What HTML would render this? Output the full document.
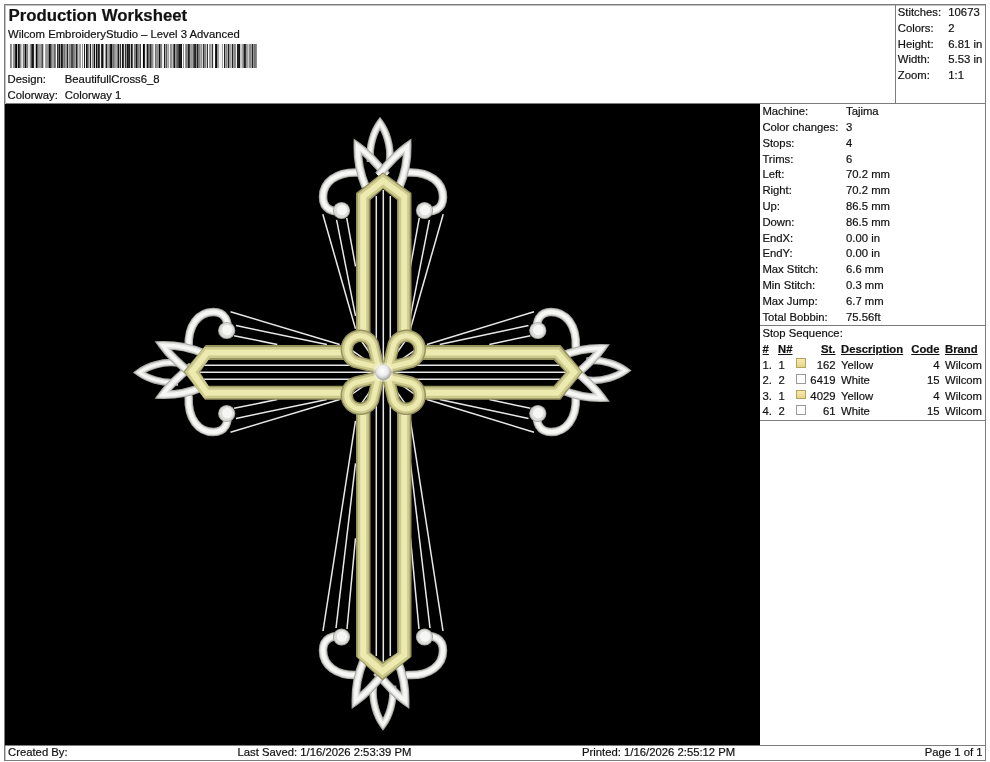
<!DOCTYPE html>
<html><head><meta charset="utf-8"><style>
html,body{margin:0;padding:0;background:#fff;}
body{width:990px;height:762px;position:relative;overflow:hidden;font-family:"Liberation Sans",sans-serif;color:#111;}
.t{position:absolute;line-height:1;white-space:nowrap;}
#txt{position:absolute;left:0;top:0;width:990px;height:762px;will-change:transform;-webkit-text-stroke:0.2px #111;}
.ln{position:absolute;background:#7c7c7c;}
u{text-decoration:underline;text-underline-offset:1px;}
</style></head><body>
<div class="ln" style="left:4px;top:4px;width:982px;height:1px;"></div>
<div class="ln" style="left:4px;top:4px;width:1px;height:757px;"></div>
<div class="ln" style="left:985px;top:4px;width:1px;height:757px;"></div>
<div class="ln" style="left:4px;top:760px;width:982px;height:1px;"></div>
<div class="ln" style="left:4px;top:103px;width:982px;height:1px;"></div>
<div style="position:absolute;left:5px;top:5px;width:980px;height:1px;background:#c4c4c4"></div>
<div style="position:absolute;left:5px;top:5px;width:1px;height:755px;background:#c4c4c4"></div>
<div class="ln" style="left:895px;top:4px;width:1px;height:100px;"></div>
<div class="ln" style="left:760px;top:325px;width:226px;height:1px;"></div>
<div class="ln" style="left:760px;top:420px;width:226px;height:1px;"></div>
<div class="ln" style="left:4px;top:745px;width:982px;height:1px;"></div>
<div id="txt"><div class="t" style="left:8.5px;top:7.71px;font-size:16.8px;font-weight:bold;">Production Worksheet</div>
<div class="t" style="left:8px;top:28.83px;font-size:11.3px;">Wilcom EmbroideryStudio – Level 3 Advanced</div>
<svg style="position:absolute;left:0;top:44px" width="260" height="24" shape-rendering="crispEdges"><rect x="10" y="0" width="1" height="24" fill="rgb(130,130,130)"/><rect x="11" y="0" width="1" height="24" fill="rgb(150,150,150)"/><rect x="12" y="0" width="1" height="24" fill="rgb(240,240,240)"/><rect x="13" y="0" width="1" height="24" fill="rgb(150,150,150)"/><rect x="14" y="0" width="1" height="24" fill="rgb(140,140,140)"/><rect x="15" y="0" width="1" height="24" fill="rgb(40,40,40)"/><rect x="16" y="0" width="1" height="24" fill="rgb(0,0,0)"/><rect x="17" y="0" width="1" height="24" fill="rgb(180,180,180)"/><rect x="18" y="0" width="1" height="24" fill="rgb(20,20,20)"/><rect x="19" y="0" width="1" height="24" fill="rgb(60,60,60)"/><rect x="20" y="0" width="1" height="24" fill="rgb(140,140,140)"/><rect x="21" y="0" width="1" height="24" fill="rgb(200,200,200)"/><rect x="22" y="0" width="1" height="24" fill="rgb(230,230,230)"/><rect x="23" y="0" width="1" height="24" fill="rgb(120,120,120)"/><rect x="24" y="0" width="1" height="24" fill="rgb(140,140,140)"/><rect x="25" y="0" width="1" height="24" fill="rgb(10,10,10)"/><rect x="26" y="0" width="1" height="24" fill="rgb(130,130,130)"/><rect x="27" y="0" width="1" height="24" fill="rgb(120,120,120)"/><rect x="28" y="0" width="1" height="24" fill="rgb(230,230,230)"/><rect x="29" y="0" width="1" height="24" fill="rgb(220,220,220)"/><rect x="30" y="0" width="1" height="24" fill="rgb(150,150,150)"/><rect x="31" y="0" width="1" height="24" fill="rgb(80,80,80)"/><rect x="32" y="0" width="1" height="24" fill="rgb(20,20,20)"/><rect x="33" y="0" width="1" height="24" fill="rgb(40,40,40)"/><rect x="34" y="0" width="1" height="24" fill="rgb(230,230,230)"/><rect x="35" y="0" width="1" height="24" fill="rgb(190,190,190)"/><rect x="36" y="0" width="1" height="24" fill="rgb(10,10,10)"/><rect x="37" y="0" width="1" height="24" fill="rgb(100,100,100)"/><rect x="38" y="0" width="1" height="24" fill="rgb(150,150,150)"/><rect x="39" y="0" width="1" height="24" fill="rgb(160,160,160)"/><rect x="40" y="0" width="1" height="24" fill="rgb(162,162,162)"/><rect x="41" y="0" width="1" height="24" fill="rgb(132,132,132)"/><rect x="42" y="0" width="1" height="24" fill="rgb(72,72,72)"/><rect x="43" y="0" width="1" height="24" fill="rgb(202,202,202)"/><rect x="45" y="0" width="1" height="24" fill="rgb(162,162,162)"/><rect x="46" y="0" width="1" height="24" fill="rgb(152,152,152)"/><rect x="47" y="0" width="1" height="24" fill="rgb(152,152,152)"/><rect x="48" y="0" width="1" height="24" fill="rgb(132,132,132)"/><rect x="49" y="0" width="1" height="24" fill="rgb(12,12,12)"/><rect x="50" y="0" width="1" height="24" fill="rgb(52,52,52)"/><rect x="51" y="0" width="1" height="24" fill="rgb(122,122,122)"/><rect x="52" y="0" width="1" height="24" fill="rgb(162,162,162)"/><rect x="53" y="0" width="1" height="24" fill="rgb(162,162,162)"/><rect x="54" y="0" width="1" height="24" fill="rgb(102,102,102)"/><rect x="55" y="0" width="1" height="24" fill="rgb(132,132,132)"/><rect x="57" y="0" width="1" height="24" fill="rgb(52,52,52)"/><rect x="58" y="0" width="1" height="24" fill="rgb(112,112,112)"/><rect x="59" y="0" width="1" height="24" fill="rgb(22,22,22)"/><rect x="60" y="0" width="1" height="24" fill="rgb(152,152,152)"/><rect x="61" y="0" width="1" height="24" fill="rgb(22,22,22)"/><rect x="62" y="0" width="1" height="24" fill="rgb(52,52,52)"/><rect x="63" y="0" width="1" height="24" fill="rgb(142,142,142)"/><rect x="64" y="0" width="1" height="24" fill="rgb(112,112,112)"/><rect x="65" y="0" width="1" height="24" fill="rgb(162,162,162)"/><rect x="66" y="0" width="1" height="24" fill="rgb(152,152,152)"/><rect x="67" y="0" width="1" height="24" fill="rgb(32,32,32)"/><rect x="68" y="0" width="1" height="24" fill="rgb(192,192,192)"/><rect x="69" y="0" width="1" height="24" fill="rgb(132,132,132)"/><rect x="70" y="0" width="1" height="24" fill="rgb(152,152,152)"/><rect x="71" y="0" width="1" height="24" fill="rgb(72,72,72)"/><rect x="72" y="0" width="1" height="24" fill="rgb(72,72,72)"/><rect x="73" y="0" width="1" height="24" fill="rgb(122,122,122)"/><rect x="74" y="0" width="1" height="24" fill="rgb(132,132,132)"/><rect x="75" y="0" width="1" height="24" fill="rgb(162,162,162)"/><rect x="76" y="0" width="1" height="24" fill="rgb(32,32,32)"/><rect x="77" y="0" width="1" height="24" fill="rgb(122,122,122)"/><rect x="78" y="0" width="1" height="24" fill="rgb(202,202,202)"/><rect x="79" y="0" width="1" height="24" fill="rgb(162,162,162)"/><rect x="80" y="0" width="1" height="24" fill="rgb(152,152,152)"/><rect x="82" y="0" width="1" height="24" fill="rgb(142,142,142)"/><rect x="84" y="0" width="1" height="24" fill="rgb(32,32,32)"/><rect x="85" y="0" width="1" height="24" fill="rgb(242,242,242)"/><rect x="86" y="0" width="1" height="24" fill="rgb(22,22,22)"/><rect x="87" y="0" width="1" height="24" fill="rgb(72,72,72)"/><rect x="88" y="0" width="1" height="24" fill="rgb(132,132,132)"/><rect x="89" y="0" width="1" height="24" fill="rgb(192,192,192)"/><rect x="90" y="0" width="1" height="24" fill="rgb(32,32,32)"/><rect x="91" y="0" width="1" height="24" fill="rgb(232,232,232)"/><rect x="92" y="0" width="1" height="24" fill="rgb(142,142,142)"/><rect x="93" y="0" width="1" height="24" fill="rgb(152,152,152)"/><rect x="94" y="0" width="1" height="24" fill="rgb(12,12,12)"/><rect x="95" y="0" width="1" height="24" fill="rgb(212,212,212)"/><rect x="96" y="0" width="1" height="24" fill="rgb(12,12,12)"/><rect x="97" y="0" width="1" height="24" fill="rgb(122,122,122)"/><rect x="98" y="0" width="1" height="24" fill="rgb(32,32,32)"/><rect x="99" y="0" width="1" height="24" fill="rgb(72,72,72)"/><rect x="100" y="0" width="1" height="24" fill="rgb(242,242,242)"/><rect x="101" y="0" width="1" height="24" fill="rgb(52,52,52)"/><rect x="102" y="0" width="1" height="24" fill="rgb(12,12,12)"/><rect x="103" y="0" width="1" height="24" fill="rgb(142,142,142)"/><rect x="104" y="0" width="1" height="24" fill="rgb(242,242,242)"/><rect x="105" y="0" width="1" height="24" fill="rgb(152,152,152)"/><rect x="106" y="0" width="1" height="24" fill="rgb(32,32,32)"/><rect x="107" y="0" width="1" height="24" fill="rgb(162,162,162)"/><rect x="108" y="0" width="1" height="24" fill="rgb(162,162,162)"/><rect x="109" y="0" width="1" height="24" fill="rgb(132,132,132)"/><rect x="110" y="0" width="1" height="24" fill="rgb(32,32,32)"/><rect x="111" y="0" width="1" height="24" fill="rgb(12,12,12)"/><rect x="112" y="0" width="1" height="24" fill="rgb(132,132,132)"/><rect x="113" y="0" width="1" height="24" fill="rgb(112,112,112)"/><rect x="114" y="0" width="1" height="24" fill="rgb(142,142,142)"/><rect x="115" y="0" width="1" height="24" fill="rgb(162,162,162)"/><rect x="116" y="0" width="1" height="24" fill="rgb(172,172,172)"/><rect x="117" y="0" width="1" height="24" fill="rgb(122,122,122)"/><rect x="118" y="0" width="1" height="24" fill="rgb(22,22,22)"/><rect x="119" y="0" width="1" height="24" fill="rgb(172,172,172)"/><rect x="120" y="0" width="1" height="24" fill="rgb(52,52,52)"/><rect x="121" y="0" width="1" height="24" fill="rgb(232,232,232)"/><rect x="122" y="0" width="1" height="24" fill="rgb(22,22,22)"/><rect x="123" y="0" width="1" height="24" fill="rgb(62,62,62)"/><rect x="124" y="0" width="1" height="24" fill="rgb(212,212,212)"/><rect x="125" y="0" width="1" height="24" fill="rgb(52,52,52)"/><rect x="126" y="0" width="1" height="24" fill="rgb(142,142,142)"/><rect x="127" y="0" width="1" height="24" fill="rgb(22,22,22)"/><rect x="128" y="0" width="1" height="24" fill="rgb(52,52,52)"/><rect x="129" y="0" width="1" height="24" fill="rgb(32,32,32)"/><rect x="130" y="0" width="1" height="24" fill="rgb(190,190,190)"/><rect x="131" y="0" width="1" height="24" fill="rgb(20,20,20)"/><rect x="132" y="0" width="1" height="24" fill="rgb(90,90,90)"/><rect x="133" y="0" width="1" height="24" fill="rgb(230,230,230)"/><rect x="134" y="0" width="1" height="24" fill="rgb(120,120,120)"/><rect x="135" y="0" width="1" height="24" fill="rgb(130,130,130)"/><rect x="136" y="0" width="1" height="24" fill="rgb(20,20,20)"/><rect x="137" y="0" width="1" height="24" fill="rgb(110,110,110)"/><rect x="138" y="0" width="1" height="24" fill="rgb(130,130,130)"/><rect x="139" y="0" width="1" height="24" fill="rgb(150,150,150)"/><rect x="140" y="0" width="1" height="24" fill="rgb(60,60,60)"/><rect x="142" y="0" width="1" height="24" fill="rgb(240,240,240)"/><rect x="143" y="0" width="1" height="24" fill="rgb(0,0,0)"/><rect x="144" y="0" width="1" height="24" fill="rgb(40,40,40)"/><rect x="145" y="0" width="1" height="24" fill="rgb(230,230,230)"/><rect x="146" y="0" width="1" height="24" fill="rgb(170,170,170)"/><rect x="147" y="0" width="1" height="24" fill="rgb(20,20,20)"/><rect x="148" y="0" width="1" height="24" fill="rgb(110,110,110)"/><rect x="149" y="0" width="1" height="24" fill="rgb(130,130,130)"/><rect x="150" y="0" width="1" height="24" fill="rgb(50,50,50)"/><rect x="151" y="0" width="1" height="24" fill="rgb(120,120,120)"/><rect x="152" y="0" width="1" height="24" fill="rgb(140,140,140)"/><rect x="153" y="0" width="1" height="24" fill="rgb(200,200,200)"/><rect x="154" y="0" width="1" height="24" fill="rgb(240,240,240)"/><rect x="155" y="0" width="1" height="24" fill="rgb(110,110,110)"/><rect x="156" y="0" width="1" height="24" fill="rgb(150,150,150)"/><rect x="157" y="0" width="1" height="24" fill="rgb(140,140,140)"/><rect x="158" y="0" width="1" height="24" fill="rgb(150,150,150)"/><rect x="159" y="0" width="1" height="24" fill="rgb(10,10,10)"/><rect x="160" y="0" width="1" height="24" fill="rgb(120,120,120)"/><rect x="161" y="0" width="1" height="24" fill="rgb(130,130,130)"/><rect x="162" y="0" width="1" height="24" fill="rgb(232,232,232)"/><rect x="163" y="0" width="1" height="24" fill="rgb(242,242,242)"/><rect x="164" y="0" width="1" height="24" fill="rgb(32,32,32)"/><rect x="165" y="0" width="1" height="24" fill="rgb(162,162,162)"/><rect x="166" y="0" width="1" height="24" fill="rgb(92,92,92)"/><rect x="167" y="0" width="1" height="24" fill="rgb(182,182,182)"/><rect x="168" y="0" width="1" height="24" fill="rgb(162,162,162)"/><rect x="169" y="0" width="1" height="24" fill="rgb(242,242,242)"/><rect x="170" y="0" width="1" height="24" fill="rgb(142,142,142)"/><rect x="171" y="0" width="1" height="24" fill="rgb(152,152,152)"/><rect x="172" y="0" width="1" height="24" fill="rgb(192,192,192)"/><rect x="173" y="0" width="1" height="24" fill="rgb(102,102,102)"/><rect x="174" y="0" width="1" height="24" fill="rgb(22,22,22)"/><rect x="175" y="0" width="1" height="24" fill="rgb(152,152,152)"/><rect x="176" y="0" width="1" height="24" fill="rgb(122,122,122)"/><rect x="177" y="0" width="1" height="24" fill="rgb(92,92,92)"/><rect x="178" y="0" width="1" height="24" fill="rgb(72,72,72)"/><rect x="179" y="0" width="1" height="24" fill="rgb(22,22,22)"/><rect x="180" y="0" width="1" height="24" fill="rgb(32,32,32)"/><rect x="181" y="0" width="1" height="24" fill="rgb(22,22,22)"/><rect x="183" y="0" width="1" height="24" fill="rgb(142,142,142)"/><rect x="185" y="0" width="1" height="24" fill="rgb(152,152,152)"/><rect x="186" y="0" width="1" height="24" fill="rgb(122,122,122)"/><rect x="187" y="0" width="1" height="24" fill="rgb(142,142,142)"/><rect x="188" y="0" width="1" height="24" fill="rgb(32,32,32)"/><rect x="189" y="0" width="1" height="24" fill="rgb(62,62,62)"/><rect x="190" y="0" width="1" height="24" fill="rgb(162,162,162)"/><rect x="191" y="0" width="1" height="24" fill="rgb(152,152,152)"/><rect x="192" y="0" width="1" height="24" fill="rgb(162,162,162)"/><rect x="193" y="0" width="1" height="24" fill="rgb(92,92,92)"/><rect x="194" y="0" width="1" height="24" fill="rgb(52,52,52)"/><rect x="195" y="0" width="1" height="24" fill="rgb(32,32,32)"/><rect x="196" y="0" width="1" height="24" fill="rgb(142,142,142)"/><rect x="197" y="0" width="1" height="24" fill="rgb(32,32,32)"/><rect x="198" y="0" width="1" height="24" fill="rgb(122,122,122)"/><rect x="199" y="0" width="1" height="24" fill="rgb(132,132,132)"/><rect x="200" y="0" width="1" height="24" fill="rgb(172,172,172)"/><rect x="201" y="0" width="1" height="24" fill="rgb(152,152,152)"/><rect x="202" y="0" width="1" height="24" fill="rgb(212,212,212)"/><rect x="203" y="0" width="1" height="24" fill="rgb(52,52,52)"/><rect x="204" y="0" width="1" height="24" fill="rgb(132,132,132)"/><rect x="205" y="0" width="1" height="24" fill="rgb(132,132,132)"/><rect x="206" y="0" width="1" height="24" fill="rgb(202,202,202)"/><rect x="207" y="0" width="1" height="24" fill="rgb(52,52,52)"/><rect x="209" y="0" width="1" height="24" fill="rgb(152,152,152)"/><rect x="210" y="0" width="1" height="24" fill="rgb(162,162,162)"/><rect x="211" y="0" width="1" height="24" fill="rgb(182,182,182)"/><rect x="212" y="0" width="1" height="24" fill="rgb(52,52,52)"/><rect x="213" y="0" width="1" height="24" fill="rgb(232,232,232)"/><rect x="215" y="0" width="1" height="24" fill="rgb(32,32,32)"/><rect x="216" y="0" width="1" height="24" fill="rgb(12,12,12)"/><rect x="217" y="0" width="1" height="24" fill="rgb(152,152,152)"/><rect x="218" y="0" width="1" height="24" fill="rgb(162,162,162)"/><rect x="219" y="0" width="1" height="24" fill="rgb(242,242,242)"/><rect x="220" y="0" width="1" height="24" fill="rgb(242,242,242)"/><rect x="221" y="0" width="1" height="24" fill="rgb(242,242,242)"/><rect x="222" y="0" width="1" height="24" fill="rgb(162,162,162)"/><rect x="224" y="0" width="1" height="24" fill="rgb(32,32,32)"/><rect x="225" y="0" width="1" height="24" fill="rgb(162,162,162)"/><rect x="226" y="0" width="1" height="24" fill="rgb(132,132,132)"/><rect x="227" y="0" width="1" height="24" fill="rgb(172,172,172)"/><rect x="228" y="0" width="1" height="24" fill="rgb(32,32,32)"/><rect x="229" y="0" width="1" height="24" fill="rgb(152,152,152)"/><rect x="230" y="0" width="1" height="24" fill="rgb(162,162,162)"/><rect x="231" y="0" width="1" height="24" fill="rgb(192,192,192)"/><rect x="232" y="0" width="1" height="24" fill="rgb(32,32,32)"/><rect x="233" y="0" width="1" height="24" fill="rgb(162,162,162)"/><rect x="234" y="0" width="1" height="24" fill="rgb(132,132,132)"/><rect x="235" y="0" width="1" height="24" fill="rgb(142,142,142)"/><rect x="236" y="0" width="1" height="24" fill="rgb(242,242,242)"/><rect x="237" y="0" width="1" height="24" fill="rgb(32,32,32)"/><rect x="238" y="0" width="1" height="24" fill="rgb(32,32,32)"/><rect x="239" y="0" width="1" height="24" fill="rgb(22,22,22)"/><rect x="240" y="0" width="1" height="24" fill="rgb(202,202,202)"/><rect x="241" y="0" width="1" height="24" fill="rgb(202,202,202)"/><rect x="242" y="0" width="1" height="24" fill="rgb(162,162,162)"/><rect x="243" y="0" width="1" height="24" fill="rgb(122,122,122)"/><rect x="244" y="0" width="1" height="24" fill="rgb(32,32,32)"/><rect x="245" y="0" width="1" height="24" fill="rgb(52,52,52)"/><rect x="246" y="0" width="1" height="24" fill="rgb(152,152,152)"/><rect x="247" y="0" width="1" height="24" fill="rgb(162,162,162)"/><rect x="248" y="0" width="1" height="24" fill="rgb(202,202,202)"/><rect x="249" y="0" width="1" height="24" fill="rgb(142,142,142)"/><rect x="250" y="0" width="1" height="24" fill="rgb(132,132,132)"/><rect x="251" y="0" width="1" height="24" fill="rgb(162,162,162)"/><rect x="252" y="0" width="1" height="24" fill="rgb(32,32,32)"/><rect x="253" y="0" width="1" height="24" fill="rgb(152,152,152)"/><rect x="254" y="0" width="1" height="24" fill="rgb(112,112,112)"/><rect x="255" y="0" width="1" height="24" fill="rgb(122,122,122)"/><rect x="256" y="0" width="1" height="24" fill="rgb(142,142,142)"/></svg>
<div class="t" style="left:7.6px;top:74.43px;font-size:11.3px;">Design:</div>
<div class="t" style="left:64.8px;top:74.43px;font-size:11.3px;">BeautifullCross6_8</div>
<div class="t" style="left:7.6px;top:90.23px;font-size:11.3px;">Colorway:</div>
<div class="t" style="left:64.8px;top:90.23px;font-size:11.3px;">Colorway 1</div>
<div class="t" style="left:897.8px;top:7.03px;font-size:11.3px;">Stitches:</div>
<div class="t" style="left:948.3px;top:7.03px;font-size:11.3px;">10673</div>
<div class="t" style="left:897.8px;top:22.78px;font-size:11.3px;">Colors:</div>
<div class="t" style="left:948.3px;top:22.78px;font-size:11.3px;">2</div>
<div class="t" style="left:897.8px;top:38.53px;font-size:11.3px;">Height:</div>
<div class="t" style="left:948.3px;top:38.53px;font-size:11.3px;">6.81 in</div>
<div class="t" style="left:897.8px;top:54.28px;font-size:11.3px;">Width:</div>
<div class="t" style="left:948.3px;top:54.28px;font-size:11.3px;">5.53 in</div>
<div class="t" style="left:897.8px;top:70.03px;font-size:11.3px;">Zoom:</div>
<div class="t" style="left:948.3px;top:70.03px;font-size:11.3px;">1:1</div>
<div class="t" style="left:762.4px;top:106.13px;font-size:11.3px;">Machine:</div>
<div class="t" style="left:846px;top:106.13px;font-size:11.3px;">Tajima</div>
<div class="t" style="left:762.4px;top:121.93px;font-size:11.3px;">Color changes:</div>
<div class="t" style="left:846px;top:121.93px;font-size:11.3px;">3</div>
<div class="t" style="left:762.4px;top:137.73px;font-size:11.3px;">Stops:</div>
<div class="t" style="left:846px;top:137.73px;font-size:11.3px;">4</div>
<div class="t" style="left:762.4px;top:153.53px;font-size:11.3px;">Trims:</div>
<div class="t" style="left:846px;top:153.53px;font-size:11.3px;">6</div>
<div class="t" style="left:762.4px;top:169.33px;font-size:11.3px;">Left:</div>
<div class="t" style="left:846px;top:169.33px;font-size:11.3px;">70.2 mm</div>
<div class="t" style="left:762.4px;top:185.13px;font-size:11.3px;">Right:</div>
<div class="t" style="left:846px;top:185.13px;font-size:11.3px;">70.2 mm</div>
<div class="t" style="left:762.4px;top:200.93px;font-size:11.3px;">Up:</div>
<div class="t" style="left:846px;top:200.93px;font-size:11.3px;">86.5 mm</div>
<div class="t" style="left:762.4px;top:216.73px;font-size:11.3px;">Down:</div>
<div class="t" style="left:846px;top:216.73px;font-size:11.3px;">86.5 mm</div>
<div class="t" style="left:762.4px;top:232.53px;font-size:11.3px;">EndX:</div>
<div class="t" style="left:846px;top:232.53px;font-size:11.3px;">0.00 in</div>
<div class="t" style="left:762.4px;top:248.33px;font-size:11.3px;">EndY:</div>
<div class="t" style="left:846px;top:248.33px;font-size:11.3px;">0.00 in</div>
<div class="t" style="left:762.4px;top:264.13px;font-size:11.3px;">Max Stitch:</div>
<div class="t" style="left:846px;top:264.13px;font-size:11.3px;">6.6 mm</div>
<div class="t" style="left:762.4px;top:279.93px;font-size:11.3px;">Min Stitch:</div>
<div class="t" style="left:846px;top:279.93px;font-size:11.3px;">0.3 mm</div>
<div class="t" style="left:762.4px;top:295.73px;font-size:11.3px;">Max Jump:</div>
<div class="t" style="left:846px;top:295.73px;font-size:11.3px;">6.7 mm</div>
<div class="t" style="left:762.4px;top:311.53px;font-size:11.3px;">Total Bobbin:</div>
<div class="t" style="left:846px;top:311.53px;font-size:11.3px;">75.56ft</div>
<div class="t" style="left:762.4px;top:327.53px;font-size:11.3px;">Stop Sequence:</div>
<div class="t" style="left:762.6px;top:343.53px;font-size:11.3px;font-weight:bold;"><u>#</u></div>
<div class="t" style="left:778px;top:343.53px;font-size:11.3px;font-weight:bold;"><u>N#</u></div>
<div class="t" style="right:154.5px;top:343.53px;font-size:11.3px;text-align:right;font-weight:bold;"><u>St.</u></div>
<div class="t" style="left:841px;top:343.53px;font-size:11.3px;font-weight:bold;"><u>Description</u></div>
<div class="t" style="right:50.5px;top:343.53px;font-size:11.3px;text-align:right;font-weight:bold;"><u>Code</u></div>
<div class="t" style="left:945px;top:343.53px;font-size:11.3px;font-weight:bold;"><u>Brand</u></div>
<div class="t" style="left:762.4px;top:359.53px;font-size:11.3px;">1.</div>
<div class="t" style="left:778.5px;top:359.53px;font-size:11.3px;">1</div>
<div style="position:absolute;left:796px;top:358.4px;width:8px;height:7.6px;border:1px solid #b4a45c;background:linear-gradient(#f6eab0,#e6d488);"></div>
<div class="t" style="right:154.5px;top:359.53px;font-size:11.3px;text-align:right;">162</div>
<div class="t" style="left:841px;top:359.53px;font-size:11.3px;">Yellow</div>
<div class="t" style="right:50.5px;top:359.53px;font-size:11.3px;text-align:right;">4</div>
<div class="t" style="left:945px;top:359.53px;font-size:11.3px;">Wilcom</div>
<div class="t" style="left:762.4px;top:375.18px;font-size:11.3px;">2.</div>
<div class="t" style="left:778.5px;top:375.18px;font-size:11.3px;">2</div>
<div style="position:absolute;left:796px;top:374.0px;width:8px;height:7.6px;border:1px solid #9a9a9a;background:#fff;"></div>
<div class="t" style="right:154.5px;top:375.18px;font-size:11.3px;text-align:right;">6419</div>
<div class="t" style="left:841px;top:375.18px;font-size:11.3px;">White</div>
<div class="t" style="right:50.5px;top:375.18px;font-size:11.3px;text-align:right;">15</div>
<div class="t" style="left:945px;top:375.18px;font-size:11.3px;">Wilcom</div>
<div class="t" style="left:762.4px;top:390.83px;font-size:11.3px;">3.</div>
<div class="t" style="left:778.5px;top:390.83px;font-size:11.3px;">1</div>
<div style="position:absolute;left:796px;top:389.7px;width:8px;height:7.6px;border:1px solid #b4a45c;background:linear-gradient(#f6eab0,#e6d488);"></div>
<div class="t" style="right:154.5px;top:390.83px;font-size:11.3px;text-align:right;">4029</div>
<div class="t" style="left:841px;top:390.83px;font-size:11.3px;">Yellow</div>
<div class="t" style="right:50.5px;top:390.83px;font-size:11.3px;text-align:right;">4</div>
<div class="t" style="left:945px;top:390.83px;font-size:11.3px;">Wilcom</div>
<div class="t" style="left:762.4px;top:406.48px;font-size:11.3px;">4.</div>
<div class="t" style="left:778.5px;top:406.48px;font-size:11.3px;">2</div>
<div style="position:absolute;left:796px;top:405.3px;width:8px;height:7.6px;border:1px solid #9a9a9a;background:#fff;"></div>
<div class="t" style="right:154.5px;top:406.48px;font-size:11.3px;text-align:right;">61</div>
<div class="t" style="left:841px;top:406.48px;font-size:11.3px;">White</div>
<div class="t" style="right:50.5px;top:406.48px;font-size:11.3px;text-align:right;">15</div>
<div class="t" style="left:945px;top:406.48px;font-size:11.3px;">Wilcom</div>
<div class="t" style="left:8px;top:746.83px;font-size:11.3px;">Created By:</div>
<div class="t" style="left:237.5px;top:746.83px;font-size:11.3px;">Last Saved: 1/16/2026 2:53:39 PM</div>
<div class="t" style="left:582px;top:746.83px;font-size:11.3px;">Printed: 1/16/2026 2:55:12 PM</div>
<div class="t" style="right:7.5px;top:746.83px;font-size:11.3px;text-align:right;">Page 1 of 1</div>
</div><div style="position:absolute;left:5px;top:104px;width:755px;height:641px;background:#000;overflow:hidden"><svg width="755" height="641" viewBox="5 104 755 641" style="display:block">
<defs>
<filter id="soft" x="-5%" y="-5%" width="110%" height="110%"><feGaussianBlur stdDeviation="0.6"/></filter>
<radialGradient id="dot" cx="45%" cy="40%" r="60%"><stop offset="0" stop-color="#ffffff"/><stop offset="0.55" stop-color="#ececec"/><stop offset="1" stop-color="#a0a0a0"/></radialGradient>
</defs>
<g filter="url(#soft)">
<line x1="376.30" y1="196.00" x2="376.30" y2="656.00" stroke="#e6e6e6" stroke-width="1.5"/>
<line x1="383.30" y1="190.00" x2="383.30" y2="662.00" stroke="#e6e6e6" stroke-width="1.5"/>
<line x1="390.30" y1="196.00" x2="390.30" y2="656.00" stroke="#e6e6e6" stroke-width="1.5"/>
<line x1="204.00" y1="365.30" x2="560.00" y2="365.30" stroke="#e6e6e6" stroke-width="1.5"/>
<line x1="199.00" y1="372.30" x2="566.00" y2="372.30" stroke="#e6e6e6" stroke-width="1.5"/>
<line x1="204.00" y1="379.30" x2="560.00" y2="379.30" stroke="#e6e6e6" stroke-width="1.5"/>
<line x1="443.20" y1="214.30" x2="410.50" y2="328.70" stroke="#e8e8e8" stroke-width="1.5"/>
<line x1="429.40" y1="219.80" x2="410.50" y2="315.90" stroke="#e8e8e8" stroke-width="1.5"/>
<line x1="419.30" y1="217.90" x2="410.50" y2="266.30" stroke="#e8e8e8" stroke-width="1.5"/>
<line x1="322.80" y1="214.30" x2="355.50" y2="328.70" stroke="#e8e8e8" stroke-width="1.5"/>
<line x1="336.60" y1="219.80" x2="355.50" y2="315.90" stroke="#e8e8e8" stroke-width="1.5"/>
<line x1="346.70" y1="217.90" x2="355.50" y2="266.30" stroke="#e8e8e8" stroke-width="1.5"/>
<line x1="323.00" y1="631.00" x2="355.50" y2="420.80" stroke="#e8e8e8" stroke-width="1.5"/>
<line x1="336.00" y1="628.00" x2="355.50" y2="463.30" stroke="#e8e8e8" stroke-width="1.5"/>
<line x1="347.00" y1="629.00" x2="355.50" y2="538.30" stroke="#e8e8e8" stroke-width="1.5"/>
<line x1="443.00" y1="631.00" x2="410.50" y2="420.80" stroke="#e8e8e8" stroke-width="1.5"/>
<line x1="430.00" y1="628.00" x2="410.50" y2="463.30" stroke="#e8e8e8" stroke-width="1.5"/>
<line x1="419.00" y1="629.00" x2="410.50" y2="538.30" stroke="#e8e8e8" stroke-width="1.5"/>
<line x1="230.50" y1="311.80" x2="339.70" y2="344.50" stroke="#e8e8e8" stroke-width="1.5"/>
<line x1="236.00" y1="325.60" x2="326.90" y2="344.50" stroke="#e8e8e8" stroke-width="1.5"/>
<line x1="234.10" y1="335.70" x2="277.30" y2="344.50" stroke="#e8e8e8" stroke-width="1.5"/>
<line x1="230.50" y1="432.20" x2="339.70" y2="399.50" stroke="#e8e8e8" stroke-width="1.5"/>
<line x1="236.00" y1="418.40" x2="326.90" y2="399.50" stroke="#e8e8e8" stroke-width="1.5"/>
<line x1="234.10" y1="408.30" x2="277.30" y2="399.50" stroke="#e8e8e8" stroke-width="1.5"/>
<line x1="534.00" y1="432.20" x2="426.90" y2="399.50" stroke="#e8e8e8" stroke-width="1.5"/>
<line x1="528.50" y1="418.40" x2="439.70" y2="399.50" stroke="#e8e8e8" stroke-width="1.5"/>
<line x1="530.40" y1="408.30" x2="489.30" y2="399.50" stroke="#e8e8e8" stroke-width="1.5"/>
<line x1="534.00" y1="311.80" x2="426.90" y2="344.50" stroke="#e8e8e8" stroke-width="1.5"/>
<line x1="528.50" y1="325.60" x2="439.70" y2="344.50" stroke="#e8e8e8" stroke-width="1.5"/>
<line x1="530.40" y1="335.70" x2="489.30" y2="344.50" stroke="#e8e8e8" stroke-width="1.5"/>
<path d="M 358.00,172.50 C 336.00,171.50 323.00,182.50 323.00,197.00 C 323.00,209.50 333.00,212.50 342.00,211.00" fill="none" stroke="#a8a8a4" stroke-width="8.5" stroke-linecap="round" stroke-linejoin="round"/><path d="M 358.00,172.50 C 336.00,171.50 323.00,182.50 323.00,197.00 C 323.00,209.50 333.00,212.50 342.00,211.00" fill="none" stroke="#dcdcd9" stroke-width="6.5" stroke-linecap="round" stroke-linejoin="round"/><path d="M 358.00,172.50 C 336.00,171.50 323.00,182.50 323.00,197.00 C 323.00,209.50 333.00,212.50 342.00,211.00" fill="none" stroke="#f6f6f4" stroke-width="4.0" stroke-linecap="round" stroke-linejoin="round"/>
<circle cx="341.50" cy="210.50" r="8.6" fill="#a8a8a4"/><circle cx="341.50" cy="210.50" r="7.6" fill="#dcdcd9"/><circle cx="342.00" cy="210.00" r="5.2" fill="#f6f6f4"/>
<path d="M 408.00,172.50 C 430.00,171.50 443.00,182.50 443.00,197.00 C 443.00,209.50 433.00,212.50 424.00,211.00" fill="none" stroke="#a8a8a4" stroke-width="8.5" stroke-linecap="round" stroke-linejoin="round"/><path d="M 408.00,172.50 C 430.00,171.50 443.00,182.50 443.00,197.00 C 443.00,209.50 433.00,212.50 424.00,211.00" fill="none" stroke="#dcdcd9" stroke-width="6.5" stroke-linecap="round" stroke-linejoin="round"/><path d="M 408.00,172.50 C 430.00,171.50 443.00,182.50 443.00,197.00 C 443.00,209.50 433.00,212.50 424.00,211.00" fill="none" stroke="#f6f6f4" stroke-width="4.0" stroke-linecap="round" stroke-linejoin="round"/>
<circle cx="424.50" cy="210.50" r="8.6" fill="#a8a8a4"/><circle cx="424.50" cy="210.50" r="7.6" fill="#dcdcd9"/><circle cx="425.00" cy="210.00" r="5.2" fill="#f6f6f4"/>
<path d="M 370.50,161.50 C 368.50,145.50 374.50,130.50 380.00,123.00 C 385.50,130.50 391.50,145.50 389.50,161.50" fill="none" stroke="#a8a8a4" stroke-width="7.5" stroke-linecap="butt" stroke-linejoin="miter" stroke-miterlimit="6"/><path d="M 370.50,161.50 C 368.50,145.50 374.50,130.50 380.00,123.00 C 385.50,130.50 391.50,145.50 389.50,161.50" fill="none" stroke="#dcdcd9" stroke-width="5.3" stroke-linecap="butt" stroke-linejoin="miter" stroke-miterlimit="6"/><path d="M 370.50,161.50 C 368.50,145.50 374.50,130.50 380.00,123.00 C 385.50,130.50 391.50,145.50 389.50,161.50" fill="none" stroke="#f6f6f4" stroke-width="2.7" stroke-linecap="butt" stroke-linejoin="miter" stroke-miterlimit="6"/>
<path d="M 365.50,186.50 C 360.00,173.50 357.50,160.50 357.75,146.50 Q 370.50,155.50 386.50,175.50" fill="none" stroke="#a8a8a4" stroke-width="8.5" stroke-linecap="butt" stroke-linejoin="miter" stroke-miterlimit="6"/><path d="M 365.50,186.50 C 360.00,173.50 357.50,160.50 357.75,146.50 Q 370.50,155.50 386.50,175.50" fill="none" stroke="#dcdcd9" stroke-width="6.3" stroke-linecap="butt" stroke-linejoin="miter" stroke-miterlimit="6"/><path d="M 365.50,186.50 C 360.00,173.50 357.50,160.50 357.75,146.50 Q 370.50,155.50 386.50,175.50" fill="none" stroke="#f6f6f4" stroke-width="3.7" stroke-linecap="butt" stroke-linejoin="miter" stroke-miterlimit="6"/>
<path d="M 399.50,186.50 C 405.00,173.50 407.50,160.50 407.25,146.50 Q 394.50,155.50 378.50,175.50" fill="none" stroke="#a8a8a4" stroke-width="8.5" stroke-linecap="butt" stroke-linejoin="miter" stroke-miterlimit="6"/><path d="M 399.50,186.50 C 405.00,173.50 407.50,160.50 407.25,146.50 Q 394.50,155.50 378.50,175.50" fill="none" stroke="#dcdcd9" stroke-width="6.3" stroke-linecap="butt" stroke-linejoin="miter" stroke-miterlimit="6"/><path d="M 399.50,186.50 C 405.00,173.50 407.50,160.50 407.25,146.50 Q 394.50,155.50 378.50,175.50" fill="none" stroke="#f6f6f4" stroke-width="3.7" stroke-linecap="butt" stroke-linejoin="miter" stroke-miterlimit="6"/>
<path d="M 408.00,675.00 C 430.00,676.00 443.00,665.00 443.00,650.50 C 443.00,638.00 433.00,635.00 424.00,636.50" fill="none" stroke="#a8a8a4" stroke-width="8.5" stroke-linecap="round" stroke-linejoin="round"/><path d="M 408.00,675.00 C 430.00,676.00 443.00,665.00 443.00,650.50 C 443.00,638.00 433.00,635.00 424.00,636.50" fill="none" stroke="#dcdcd9" stroke-width="6.5" stroke-linecap="round" stroke-linejoin="round"/><path d="M 408.00,675.00 C 430.00,676.00 443.00,665.00 443.00,650.50 C 443.00,638.00 433.00,635.00 424.00,636.50" fill="none" stroke="#f6f6f4" stroke-width="4.0" stroke-linecap="round" stroke-linejoin="round"/>
<circle cx="424.50" cy="637.00" r="8.6" fill="#a8a8a4"/><circle cx="424.50" cy="637.00" r="7.6" fill="#dcdcd9"/><circle cx="425.00" cy="636.50" r="5.2" fill="#f6f6f4"/>
<path d="M 358.00,675.00 C 336.00,676.00 323.00,665.00 323.00,650.50 C 323.00,638.00 333.00,635.00 342.00,636.50" fill="none" stroke="#a8a8a4" stroke-width="8.5" stroke-linecap="round" stroke-linejoin="round"/><path d="M 358.00,675.00 C 336.00,676.00 323.00,665.00 323.00,650.50 C 323.00,638.00 333.00,635.00 342.00,636.50" fill="none" stroke="#dcdcd9" stroke-width="6.5" stroke-linecap="round" stroke-linejoin="round"/><path d="M 358.00,675.00 C 336.00,676.00 323.00,665.00 323.00,650.50 C 323.00,638.00 333.00,635.00 342.00,636.50" fill="none" stroke="#f6f6f4" stroke-width="4.0" stroke-linecap="round" stroke-linejoin="round"/>
<circle cx="341.50" cy="637.00" r="8.6" fill="#a8a8a4"/><circle cx="341.50" cy="637.00" r="7.6" fill="#dcdcd9"/><circle cx="342.00" cy="636.50" r="5.2" fill="#f6f6f4"/>
<path d="M 392.50,686.00 C 394.50,702.00 388.50,717.00 383.00,724.50 C 377.50,717.00 371.50,702.00 373.50,686.00" fill="none" stroke="#a8a8a4" stroke-width="7.5" stroke-linecap="butt" stroke-linejoin="miter" stroke-miterlimit="6"/><path d="M 392.50,686.00 C 394.50,702.00 388.50,717.00 383.00,724.50 C 377.50,717.00 371.50,702.00 373.50,686.00" fill="none" stroke="#dcdcd9" stroke-width="5.3" stroke-linecap="butt" stroke-linejoin="miter" stroke-miterlimit="6"/><path d="M 392.50,686.00 C 394.50,702.00 388.50,717.00 383.00,724.50 C 377.50,717.00 371.50,702.00 373.50,686.00" fill="none" stroke="#f6f6f4" stroke-width="2.7" stroke-linecap="butt" stroke-linejoin="miter" stroke-miterlimit="6"/>
<path d="M 397.50,661.00 C 403.00,674.00 405.50,687.00 405.25,701.00 Q 392.50,692.00 376.50,672.00" fill="none" stroke="#a8a8a4" stroke-width="8.5" stroke-linecap="butt" stroke-linejoin="miter" stroke-miterlimit="6"/><path d="M 397.50,661.00 C 403.00,674.00 405.50,687.00 405.25,701.00 Q 392.50,692.00 376.50,672.00" fill="none" stroke="#dcdcd9" stroke-width="6.3" stroke-linecap="butt" stroke-linejoin="miter" stroke-miterlimit="6"/><path d="M 397.50,661.00 C 403.00,674.00 405.50,687.00 405.25,701.00 Q 392.50,692.00 376.50,672.00" fill="none" stroke="#f6f6f4" stroke-width="3.7" stroke-linecap="butt" stroke-linejoin="miter" stroke-miterlimit="6"/>
<path d="M 363.50,661.00 C 358.00,674.00 355.50,687.00 355.75,701.00 Q 368.50,692.00 384.50,672.00" fill="none" stroke="#a8a8a4" stroke-width="8.5" stroke-linecap="butt" stroke-linejoin="miter" stroke-miterlimit="6"/><path d="M 363.50,661.00 C 358.00,674.00 355.50,687.00 355.75,701.00 Q 368.50,692.00 384.50,672.00" fill="none" stroke="#dcdcd9" stroke-width="6.3" stroke-linecap="butt" stroke-linejoin="miter" stroke-miterlimit="6"/><path d="M 363.50,661.00 C 358.00,674.00 355.50,687.00 355.75,701.00 Q 368.50,692.00 384.50,672.00" fill="none" stroke="#f6f6f4" stroke-width="3.7" stroke-linecap="butt" stroke-linejoin="miter" stroke-miterlimit="6"/>
<path d="M 188.70,397.00 C 187.70,419.00 198.70,432.00 213.20,432.00 C 225.70,432.00 228.70,422.00 227.20,413.00" fill="none" stroke="#a8a8a4" stroke-width="8.5" stroke-linecap="round" stroke-linejoin="round"/><path d="M 188.70,397.00 C 187.70,419.00 198.70,432.00 213.20,432.00 C 225.70,432.00 228.70,422.00 227.20,413.00" fill="none" stroke="#dcdcd9" stroke-width="6.5" stroke-linecap="round" stroke-linejoin="round"/><path d="M 188.70,397.00 C 187.70,419.00 198.70,432.00 213.20,432.00 C 225.70,432.00 228.70,422.00 227.20,413.00" fill="none" stroke="#f6f6f4" stroke-width="4.0" stroke-linecap="round" stroke-linejoin="round"/>
<circle cx="226.70" cy="413.50" r="8.6" fill="#a8a8a4"/><circle cx="226.70" cy="413.50" r="7.6" fill="#dcdcd9"/><circle cx="227.20" cy="413.00" r="5.2" fill="#f6f6f4"/>
<path d="M 188.70,347.00 C 187.70,325.00 198.70,312.00 213.20,312.00 C 225.70,312.00 228.70,322.00 227.20,331.00" fill="none" stroke="#a8a8a4" stroke-width="8.5" stroke-linecap="round" stroke-linejoin="round"/><path d="M 188.70,347.00 C 187.70,325.00 198.70,312.00 213.20,312.00 C 225.70,312.00 228.70,322.00 227.20,331.00" fill="none" stroke="#dcdcd9" stroke-width="6.5" stroke-linecap="round" stroke-linejoin="round"/><path d="M 188.70,347.00 C 187.70,325.00 198.70,312.00 213.20,312.00 C 225.70,312.00 228.70,322.00 227.20,331.00" fill="none" stroke="#f6f6f4" stroke-width="4.0" stroke-linecap="round" stroke-linejoin="round"/>
<circle cx="226.70" cy="330.50" r="8.6" fill="#a8a8a4"/><circle cx="226.70" cy="330.50" r="7.6" fill="#dcdcd9"/><circle cx="227.20" cy="330.00" r="5.2" fill="#f6f6f4"/>
<path d="M 177.70,382.00 C 161.70,384.00 146.70,378.00 139.20,372.50 C 146.70,367.00 161.70,361.00 177.70,363.00" fill="none" stroke="#a8a8a4" stroke-width="7.5" stroke-linecap="butt" stroke-linejoin="miter" stroke-miterlimit="6"/><path d="M 177.70,382.00 C 161.70,384.00 146.70,378.00 139.20,372.50 C 146.70,367.00 161.70,361.00 177.70,363.00" fill="none" stroke="#dcdcd9" stroke-width="5.3" stroke-linecap="butt" stroke-linejoin="miter" stroke-miterlimit="6"/><path d="M 177.70,382.00 C 161.70,384.00 146.70,378.00 139.20,372.50 C 146.70,367.00 161.70,361.00 177.70,363.00" fill="none" stroke="#f6f6f4" stroke-width="2.7" stroke-linecap="butt" stroke-linejoin="miter" stroke-miterlimit="6"/>
<path d="M 202.70,387.00 C 189.70,392.50 176.70,395.00 162.70,394.75 Q 171.70,382.00 191.70,366.00" fill="none" stroke="#a8a8a4" stroke-width="8.5" stroke-linecap="butt" stroke-linejoin="miter" stroke-miterlimit="6"/><path d="M 202.70,387.00 C 189.70,392.50 176.70,395.00 162.70,394.75 Q 171.70,382.00 191.70,366.00" fill="none" stroke="#dcdcd9" stroke-width="6.3" stroke-linecap="butt" stroke-linejoin="miter" stroke-miterlimit="6"/><path d="M 202.70,387.00 C 189.70,392.50 176.70,395.00 162.70,394.75 Q 171.70,382.00 191.70,366.00" fill="none" stroke="#f6f6f4" stroke-width="3.7" stroke-linecap="butt" stroke-linejoin="miter" stroke-miterlimit="6"/>
<path d="M 202.70,353.00 C 189.70,347.50 176.70,345.00 162.70,345.25 Q 171.70,358.00 191.70,374.00" fill="none" stroke="#a8a8a4" stroke-width="8.5" stroke-linecap="butt" stroke-linejoin="miter" stroke-miterlimit="6"/><path d="M 202.70,353.00 C 189.70,347.50 176.70,345.00 162.70,345.25 Q 171.70,358.00 191.70,374.00" fill="none" stroke="#dcdcd9" stroke-width="6.3" stroke-linecap="butt" stroke-linejoin="miter" stroke-miterlimit="6"/><path d="M 202.70,353.00 C 189.70,347.50 176.70,345.00 162.70,345.25 Q 171.70,358.00 191.70,374.00" fill="none" stroke="#f6f6f4" stroke-width="3.7" stroke-linecap="butt" stroke-linejoin="miter" stroke-miterlimit="6"/>
<path d="M 575.80,347.00 C 576.80,325.00 565.80,312.00 551.30,312.00 C 538.80,312.00 535.80,322.00 537.30,331.00" fill="none" stroke="#a8a8a4" stroke-width="8.5" stroke-linecap="round" stroke-linejoin="round"/><path d="M 575.80,347.00 C 576.80,325.00 565.80,312.00 551.30,312.00 C 538.80,312.00 535.80,322.00 537.30,331.00" fill="none" stroke="#dcdcd9" stroke-width="6.5" stroke-linecap="round" stroke-linejoin="round"/><path d="M 575.80,347.00 C 576.80,325.00 565.80,312.00 551.30,312.00 C 538.80,312.00 535.80,322.00 537.30,331.00" fill="none" stroke="#f6f6f4" stroke-width="4.0" stroke-linecap="round" stroke-linejoin="round"/>
<circle cx="537.80" cy="330.50" r="8.6" fill="#a8a8a4"/><circle cx="537.80" cy="330.50" r="7.6" fill="#dcdcd9"/><circle cx="538.30" cy="330.00" r="5.2" fill="#f6f6f4"/>
<path d="M 575.80,397.00 C 576.80,419.00 565.80,432.00 551.30,432.00 C 538.80,432.00 535.80,422.00 537.30,413.00" fill="none" stroke="#a8a8a4" stroke-width="8.5" stroke-linecap="round" stroke-linejoin="round"/><path d="M 575.80,397.00 C 576.80,419.00 565.80,432.00 551.30,432.00 C 538.80,432.00 535.80,422.00 537.30,413.00" fill="none" stroke="#dcdcd9" stroke-width="6.5" stroke-linecap="round" stroke-linejoin="round"/><path d="M 575.80,397.00 C 576.80,419.00 565.80,432.00 551.30,432.00 C 538.80,432.00 535.80,422.00 537.30,413.00" fill="none" stroke="#f6f6f4" stroke-width="4.0" stroke-linecap="round" stroke-linejoin="round"/>
<circle cx="537.80" cy="413.50" r="8.6" fill="#a8a8a4"/><circle cx="537.80" cy="413.50" r="7.6" fill="#dcdcd9"/><circle cx="538.30" cy="413.00" r="5.2" fill="#f6f6f4"/>
<path d="M 586.80,361.00 C 602.80,359.00 617.80,365.00 625.30,370.50 C 617.80,376.00 602.80,382.00 586.80,380.00" fill="none" stroke="#a8a8a4" stroke-width="7.5" stroke-linecap="butt" stroke-linejoin="miter" stroke-miterlimit="6"/><path d="M 586.80,361.00 C 602.80,359.00 617.80,365.00 625.30,370.50 C 617.80,376.00 602.80,382.00 586.80,380.00" fill="none" stroke="#dcdcd9" stroke-width="5.3" stroke-linecap="butt" stroke-linejoin="miter" stroke-miterlimit="6"/><path d="M 586.80,361.00 C 602.80,359.00 617.80,365.00 625.30,370.50 C 617.80,376.00 602.80,382.00 586.80,380.00" fill="none" stroke="#f6f6f4" stroke-width="2.7" stroke-linecap="butt" stroke-linejoin="miter" stroke-miterlimit="6"/>
<path d="M 561.80,356.00 C 574.80,350.50 587.80,348.00 601.80,348.25 Q 592.80,361.00 572.80,377.00" fill="none" stroke="#a8a8a4" stroke-width="8.5" stroke-linecap="butt" stroke-linejoin="miter" stroke-miterlimit="6"/><path d="M 561.80,356.00 C 574.80,350.50 587.80,348.00 601.80,348.25 Q 592.80,361.00 572.80,377.00" fill="none" stroke="#dcdcd9" stroke-width="6.3" stroke-linecap="butt" stroke-linejoin="miter" stroke-miterlimit="6"/><path d="M 561.80,356.00 C 574.80,350.50 587.80,348.00 601.80,348.25 Q 592.80,361.00 572.80,377.00" fill="none" stroke="#f6f6f4" stroke-width="3.7" stroke-linecap="butt" stroke-linejoin="miter" stroke-miterlimit="6"/>
<path d="M 561.80,390.00 C 574.80,395.50 587.80,398.00 601.80,397.75 Q 592.80,385.00 572.80,369.00" fill="none" stroke="#a8a8a4" stroke-width="8.5" stroke-linecap="butt" stroke-linejoin="miter" stroke-miterlimit="6"/><path d="M 561.80,390.00 C 574.80,395.50 587.80,398.00 601.80,397.75 Q 592.80,385.00 572.80,369.00" fill="none" stroke="#dcdcd9" stroke-width="6.3" stroke-linecap="butt" stroke-linejoin="miter" stroke-miterlimit="6"/><path d="M 561.80,390.00 C 574.80,395.50 587.80,398.00 601.80,397.75 Q 592.80,385.00 572.80,369.00" fill="none" stroke="#f6f6f4" stroke-width="3.7" stroke-linecap="butt" stroke-linejoin="miter" stroke-miterlimit="6"/>
<clipPath id="yc"><path d="M 356.0,193.0 L 383.0,172.3 L 411.5,193.0 L 411.5,345.0 L 560.5,345.0 L 582.8,372.0 L 560.5,399.8 L 411.5,399.8 L 411.5,656.8 L 382.5,680.5 L 356.0,656.8 L 356.0,399.8 L 205.0,399.8 L 183.5,371.5 L 205.8,345.0 L 356.0,345.0 Z M 370.5,200.0 L 383.0,189.0 L 397.0,200.0 L 397.0,360.0 L 553.7,360.0 L 565.6,372.3 L 553.7,385.8 L 397.0,385.8 L 397.0,652.8 L 382.5,662.3 L 370.5,652.8 L 370.5,385.8 L 208.5,385.8 L 200.0,372.3 L 208.5,360.0 L 370.5,360.0 Z" clip-rule="evenodd"/></clipPath>
<path d="M 356.0,193.0 L 383.0,172.3 L 411.5,193.0 L 411.5,345.0 L 560.5,345.0 L 582.8,372.0 L 560.5,399.8 L 411.5,399.8 L 411.5,656.8 L 382.5,680.5 L 356.0,656.8 L 356.0,399.8 L 205.0,399.8 L 183.5,371.5 L 205.8,345.0 L 356.0,345.0 Z M 370.5,200.0 L 383.0,189.0 L 397.0,200.0 L 397.0,360.0 L 553.7,360.0 L 565.6,372.3 L 553.7,385.8 L 397.0,385.8 L 397.0,652.8 L 382.5,662.3 L 370.5,652.8 L 370.5,385.8 L 208.5,385.8 L 200.0,372.3 L 208.5,360.0 L 370.5,360.0 Z" fill="#96935f" fill-rule="evenodd"/>
<g clip-path="url(#yc)"><path d="M 363.2,196.5 L 383.0,180.7 L 404.2,196.5 L 404.2,352.5 L 557.1,352.5 L 574.2,372.1 L 557.1,392.8 L 404.2,392.8 L 404.2,654.8 L 382.5,671.4 L 363.2,654.8 L 363.2,392.8 L 206.8,392.8 L 191.8,371.9 L 207.2,352.5 L 363.2,352.5 Z" fill="none" stroke="#cdca8e" stroke-width="11" stroke-linejoin="miter"/><path d="M 363.2,196.5 L 383.0,180.7 L 404.2,196.5 L 404.2,352.5 L 557.1,352.5 L 574.2,372.1 L 557.1,392.8 L 404.2,392.8 L 404.2,654.8 L 382.5,671.4 L 363.2,654.8 L 363.2,392.8 L 206.8,392.8 L 191.8,371.9 L 207.2,352.5 L 363.2,352.5 Z" fill="none" stroke="#eceaae" stroke-width="6" stroke-linejoin="miter"/></g>
<path d="M 378.35,367.35 L 355.60,361.97 L 354.36,361.43 L 353.18,360.78 L 352.07,360.01 L 351.05,359.13 L 350.12,358.16 L 349.28,357.10 L 348.56,355.96 L 347.96,354.75 L 347.48,353.49 L 347.13,352.19 L 346.91,350.86 L 346.82,349.51 L 346.87,348.16 L 347.05,346.83 L 347.37,345.52 L 347.81,344.24 L 348.38,343.02 L 349.07,341.86 L 349.87,340.77 L 350.77,339.77 L 351.77,338.87 L 352.86,338.07 L 354.02,337.38 L 355.24,336.81 L 356.52,336.37 L 357.83,336.05 L 359.16,335.87 L 360.51,335.82 L 361.86,335.91 L 363.19,336.13 L 364.49,336.48 L 365.75,336.96 L 366.96,337.56 L 368.10,338.28 L 369.16,339.12 L 370.13,340.05 L 371.01,341.07 L 371.78,342.18 L 372.43,343.36 L 372.97,344.60 Z" fill="#000"/>
<path d="M 388.25,367.35 L 393.63,344.60 L 394.17,343.36 L 394.82,342.18 L 395.59,341.07 L 396.47,340.05 L 397.44,339.12 L 398.50,338.28 L 399.64,337.56 L 400.85,336.96 L 402.11,336.48 L 403.41,336.13 L 404.74,335.91 L 406.09,335.82 L 407.44,335.87 L 408.77,336.05 L 410.08,336.37 L 411.36,336.81 L 412.58,337.38 L 413.74,338.07 L 414.83,338.87 L 415.83,339.77 L 416.73,340.77 L 417.53,341.86 L 418.22,343.02 L 418.79,344.24 L 419.23,345.52 L 419.55,346.83 L 419.73,348.16 L 419.78,349.51 L 419.69,350.86 L 419.47,352.19 L 419.12,353.49 L 418.64,354.75 L 418.04,355.96 L 417.32,357.10 L 416.48,358.16 L 415.55,359.13 L 414.53,360.01 L 413.42,360.78 L 412.24,361.43 L 411.00,361.97 Z" fill="#000"/>
<path d="M 388.25,377.25 L 411.00,382.63 L 412.24,383.17 L 413.42,383.82 L 414.53,384.59 L 415.55,385.47 L 416.48,386.44 L 417.32,387.50 L 418.04,388.64 L 418.64,389.85 L 419.12,391.11 L 419.47,392.41 L 419.69,393.74 L 419.78,395.09 L 419.73,396.44 L 419.55,397.77 L 419.23,399.08 L 418.79,400.36 L 418.22,401.58 L 417.53,402.74 L 416.73,403.83 L 415.83,404.83 L 414.83,405.73 L 413.74,406.53 L 412.58,407.22 L 411.36,407.79 L 410.08,408.23 L 408.77,408.55 L 407.44,408.73 L 406.09,408.78 L 404.74,408.69 L 403.41,408.47 L 402.11,408.12 L 400.85,407.64 L 399.64,407.04 L 398.50,406.32 L 397.44,405.48 L 396.47,404.55 L 395.59,403.53 L 394.82,402.42 L 394.17,401.24 L 393.63,400.00 Z" fill="#000"/>
<path d="M 378.35,377.25 L 372.97,400.00 L 372.43,401.24 L 371.78,402.42 L 371.01,403.53 L 370.13,404.55 L 369.16,405.48 L 368.10,406.32 L 366.96,407.04 L 365.75,407.64 L 364.49,408.12 L 363.19,408.47 L 361.86,408.69 L 360.51,408.78 L 359.16,408.73 L 357.83,408.55 L 356.52,408.23 L 355.24,407.79 L 354.02,407.22 L 352.86,406.53 L 351.77,405.73 L 350.77,404.83 L 349.87,403.83 L 349.07,402.74 L 348.38,401.58 L 347.81,400.36 L 347.37,399.08 L 347.05,397.77 L 346.87,396.44 L 346.82,395.09 L 346.91,393.74 L 347.13,392.41 L 347.48,391.11 L 347.96,389.85 L 348.56,388.64 L 349.28,387.50 L 350.12,386.44 L 351.05,385.47 L 352.07,384.59 L 353.18,383.82 L 354.36,383.17 L 355.60,382.63 Z" fill="#000"/>
<line x1="375.93" y1="367.14" x2="350.53" y2="349.36" stroke="#e8e8e8" stroke-width="1.5"/>
<line x1="378.14" y1="364.93" x2="360.36" y2="339.53" stroke="#e8e8e8" stroke-width="1.5"/>
<line x1="388.46" y1="364.93" x2="406.24" y2="339.53" stroke="#e8e8e8" stroke-width="1.5"/>
<line x1="390.67" y1="367.14" x2="416.07" y2="349.36" stroke="#e8e8e8" stroke-width="1.5"/>
<line x1="390.67" y1="377.46" x2="416.07" y2="395.24" stroke="#e8e8e8" stroke-width="1.5"/>
<line x1="388.46" y1="379.67" x2="406.24" y2="405.07" stroke="#e8e8e8" stroke-width="1.5"/>
<line x1="378.14" y1="379.67" x2="360.36" y2="405.07" stroke="#e8e8e8" stroke-width="1.5"/>
<line x1="375.93" y1="377.46" x2="350.53" y2="395.24" stroke="#e8e8e8" stroke-width="1.5"/>
<path d="M 378.35,367.35 L 355.60,361.97 L 354.36,361.43 L 353.18,360.78 L 352.07,360.01 L 351.05,359.13 L 350.12,358.16 L 349.28,357.10 L 348.56,355.96 L 347.96,354.75 L 347.48,353.49 L 347.13,352.19 L 346.91,350.86 L 346.82,349.51 L 346.87,348.16 L 347.05,346.83 L 347.37,345.52 L 347.81,344.24 L 348.38,343.02 L 349.07,341.86 L 349.87,340.77 L 350.77,339.77 L 351.77,338.87 L 352.86,338.07 L 354.02,337.38 L 355.24,336.81 L 356.52,336.37 L 357.83,336.05 L 359.16,335.87 L 360.51,335.82 L 361.86,335.91 L 363.19,336.13 L 364.49,336.48 L 365.75,336.96 L 366.96,337.56 L 368.10,338.28 L 369.16,339.12 L 370.13,340.05 L 371.01,341.07 L 371.78,342.18 L 372.43,343.36 L 372.97,344.60 Z" fill="none" stroke="#96935f" stroke-width="12.5" stroke-linejoin="round"/>
<path d="M 378.35,367.35 L 355.60,361.97 L 354.36,361.43 L 353.18,360.78 L 352.07,360.01 L 351.05,359.13 L 350.12,358.16 L 349.28,357.10 L 348.56,355.96 L 347.96,354.75 L 347.48,353.49 L 347.13,352.19 L 346.91,350.86 L 346.82,349.51 L 346.87,348.16 L 347.05,346.83 L 347.37,345.52 L 347.81,344.24 L 348.38,343.02 L 349.07,341.86 L 349.87,340.77 L 350.77,339.77 L 351.77,338.87 L 352.86,338.07 L 354.02,337.38 L 355.24,336.81 L 356.52,336.37 L 357.83,336.05 L 359.16,335.87 L 360.51,335.82 L 361.86,335.91 L 363.19,336.13 L 364.49,336.48 L 365.75,336.96 L 366.96,337.56 L 368.10,338.28 L 369.16,339.12 L 370.13,340.05 L 371.01,341.07 L 371.78,342.18 L 372.43,343.36 L 372.97,344.60 Z" fill="none" stroke="#cdca8e" stroke-width="9.5" stroke-linejoin="round"/>
<path d="M 378.35,367.35 L 355.60,361.97 L 354.36,361.43 L 353.18,360.78 L 352.07,360.01 L 351.05,359.13 L 350.12,358.16 L 349.28,357.10 L 348.56,355.96 L 347.96,354.75 L 347.48,353.49 L 347.13,352.19 L 346.91,350.86 L 346.82,349.51 L 346.87,348.16 L 347.05,346.83 L 347.37,345.52 L 347.81,344.24 L 348.38,343.02 L 349.07,341.86 L 349.87,340.77 L 350.77,339.77 L 351.77,338.87 L 352.86,338.07 L 354.02,337.38 L 355.24,336.81 L 356.52,336.37 L 357.83,336.05 L 359.16,335.87 L 360.51,335.82 L 361.86,335.91 L 363.19,336.13 L 364.49,336.48 L 365.75,336.96 L 366.96,337.56 L 368.10,338.28 L 369.16,339.12 L 370.13,340.05 L 371.01,341.07 L 371.78,342.18 L 372.43,343.36 L 372.97,344.60 Z" fill="none" stroke="#eceaae" stroke-width="5" stroke-linejoin="round"/>
<path d="M 388.25,367.35 L 393.63,344.60 L 394.17,343.36 L 394.82,342.18 L 395.59,341.07 L 396.47,340.05 L 397.44,339.12 L 398.50,338.28 L 399.64,337.56 L 400.85,336.96 L 402.11,336.48 L 403.41,336.13 L 404.74,335.91 L 406.09,335.82 L 407.44,335.87 L 408.77,336.05 L 410.08,336.37 L 411.36,336.81 L 412.58,337.38 L 413.74,338.07 L 414.83,338.87 L 415.83,339.77 L 416.73,340.77 L 417.53,341.86 L 418.22,343.02 L 418.79,344.24 L 419.23,345.52 L 419.55,346.83 L 419.73,348.16 L 419.78,349.51 L 419.69,350.86 L 419.47,352.19 L 419.12,353.49 L 418.64,354.75 L 418.04,355.96 L 417.32,357.10 L 416.48,358.16 L 415.55,359.13 L 414.53,360.01 L 413.42,360.78 L 412.24,361.43 L 411.00,361.97 Z" fill="none" stroke="#96935f" stroke-width="12.5" stroke-linejoin="round"/>
<path d="M 388.25,367.35 L 393.63,344.60 L 394.17,343.36 L 394.82,342.18 L 395.59,341.07 L 396.47,340.05 L 397.44,339.12 L 398.50,338.28 L 399.64,337.56 L 400.85,336.96 L 402.11,336.48 L 403.41,336.13 L 404.74,335.91 L 406.09,335.82 L 407.44,335.87 L 408.77,336.05 L 410.08,336.37 L 411.36,336.81 L 412.58,337.38 L 413.74,338.07 L 414.83,338.87 L 415.83,339.77 L 416.73,340.77 L 417.53,341.86 L 418.22,343.02 L 418.79,344.24 L 419.23,345.52 L 419.55,346.83 L 419.73,348.16 L 419.78,349.51 L 419.69,350.86 L 419.47,352.19 L 419.12,353.49 L 418.64,354.75 L 418.04,355.96 L 417.32,357.10 L 416.48,358.16 L 415.55,359.13 L 414.53,360.01 L 413.42,360.78 L 412.24,361.43 L 411.00,361.97 Z" fill="none" stroke="#cdca8e" stroke-width="9.5" stroke-linejoin="round"/>
<path d="M 388.25,367.35 L 393.63,344.60 L 394.17,343.36 L 394.82,342.18 L 395.59,341.07 L 396.47,340.05 L 397.44,339.12 L 398.50,338.28 L 399.64,337.56 L 400.85,336.96 L 402.11,336.48 L 403.41,336.13 L 404.74,335.91 L 406.09,335.82 L 407.44,335.87 L 408.77,336.05 L 410.08,336.37 L 411.36,336.81 L 412.58,337.38 L 413.74,338.07 L 414.83,338.87 L 415.83,339.77 L 416.73,340.77 L 417.53,341.86 L 418.22,343.02 L 418.79,344.24 L 419.23,345.52 L 419.55,346.83 L 419.73,348.16 L 419.78,349.51 L 419.69,350.86 L 419.47,352.19 L 419.12,353.49 L 418.64,354.75 L 418.04,355.96 L 417.32,357.10 L 416.48,358.16 L 415.55,359.13 L 414.53,360.01 L 413.42,360.78 L 412.24,361.43 L 411.00,361.97 Z" fill="none" stroke="#eceaae" stroke-width="5" stroke-linejoin="round"/>
<path d="M 388.25,377.25 L 411.00,382.63 L 412.24,383.17 L 413.42,383.82 L 414.53,384.59 L 415.55,385.47 L 416.48,386.44 L 417.32,387.50 L 418.04,388.64 L 418.64,389.85 L 419.12,391.11 L 419.47,392.41 L 419.69,393.74 L 419.78,395.09 L 419.73,396.44 L 419.55,397.77 L 419.23,399.08 L 418.79,400.36 L 418.22,401.58 L 417.53,402.74 L 416.73,403.83 L 415.83,404.83 L 414.83,405.73 L 413.74,406.53 L 412.58,407.22 L 411.36,407.79 L 410.08,408.23 L 408.77,408.55 L 407.44,408.73 L 406.09,408.78 L 404.74,408.69 L 403.41,408.47 L 402.11,408.12 L 400.85,407.64 L 399.64,407.04 L 398.50,406.32 L 397.44,405.48 L 396.47,404.55 L 395.59,403.53 L 394.82,402.42 L 394.17,401.24 L 393.63,400.00 Z" fill="none" stroke="#96935f" stroke-width="12.5" stroke-linejoin="round"/>
<path d="M 388.25,377.25 L 411.00,382.63 L 412.24,383.17 L 413.42,383.82 L 414.53,384.59 L 415.55,385.47 L 416.48,386.44 L 417.32,387.50 L 418.04,388.64 L 418.64,389.85 L 419.12,391.11 L 419.47,392.41 L 419.69,393.74 L 419.78,395.09 L 419.73,396.44 L 419.55,397.77 L 419.23,399.08 L 418.79,400.36 L 418.22,401.58 L 417.53,402.74 L 416.73,403.83 L 415.83,404.83 L 414.83,405.73 L 413.74,406.53 L 412.58,407.22 L 411.36,407.79 L 410.08,408.23 L 408.77,408.55 L 407.44,408.73 L 406.09,408.78 L 404.74,408.69 L 403.41,408.47 L 402.11,408.12 L 400.85,407.64 L 399.64,407.04 L 398.50,406.32 L 397.44,405.48 L 396.47,404.55 L 395.59,403.53 L 394.82,402.42 L 394.17,401.24 L 393.63,400.00 Z" fill="none" stroke="#cdca8e" stroke-width="9.5" stroke-linejoin="round"/>
<path d="M 388.25,377.25 L 411.00,382.63 L 412.24,383.17 L 413.42,383.82 L 414.53,384.59 L 415.55,385.47 L 416.48,386.44 L 417.32,387.50 L 418.04,388.64 L 418.64,389.85 L 419.12,391.11 L 419.47,392.41 L 419.69,393.74 L 419.78,395.09 L 419.73,396.44 L 419.55,397.77 L 419.23,399.08 L 418.79,400.36 L 418.22,401.58 L 417.53,402.74 L 416.73,403.83 L 415.83,404.83 L 414.83,405.73 L 413.74,406.53 L 412.58,407.22 L 411.36,407.79 L 410.08,408.23 L 408.77,408.55 L 407.44,408.73 L 406.09,408.78 L 404.74,408.69 L 403.41,408.47 L 402.11,408.12 L 400.85,407.64 L 399.64,407.04 L 398.50,406.32 L 397.44,405.48 L 396.47,404.55 L 395.59,403.53 L 394.82,402.42 L 394.17,401.24 L 393.63,400.00 Z" fill="none" stroke="#eceaae" stroke-width="5" stroke-linejoin="round"/>
<path d="M 378.35,377.25 L 372.97,400.00 L 372.43,401.24 L 371.78,402.42 L 371.01,403.53 L 370.13,404.55 L 369.16,405.48 L 368.10,406.32 L 366.96,407.04 L 365.75,407.64 L 364.49,408.12 L 363.19,408.47 L 361.86,408.69 L 360.51,408.78 L 359.16,408.73 L 357.83,408.55 L 356.52,408.23 L 355.24,407.79 L 354.02,407.22 L 352.86,406.53 L 351.77,405.73 L 350.77,404.83 L 349.87,403.83 L 349.07,402.74 L 348.38,401.58 L 347.81,400.36 L 347.37,399.08 L 347.05,397.77 L 346.87,396.44 L 346.82,395.09 L 346.91,393.74 L 347.13,392.41 L 347.48,391.11 L 347.96,389.85 L 348.56,388.64 L 349.28,387.50 L 350.12,386.44 L 351.05,385.47 L 352.07,384.59 L 353.18,383.82 L 354.36,383.17 L 355.60,382.63 Z" fill="none" stroke="#96935f" stroke-width="12.5" stroke-linejoin="round"/>
<path d="M 378.35,377.25 L 372.97,400.00 L 372.43,401.24 L 371.78,402.42 L 371.01,403.53 L 370.13,404.55 L 369.16,405.48 L 368.10,406.32 L 366.96,407.04 L 365.75,407.64 L 364.49,408.12 L 363.19,408.47 L 361.86,408.69 L 360.51,408.78 L 359.16,408.73 L 357.83,408.55 L 356.52,408.23 L 355.24,407.79 L 354.02,407.22 L 352.86,406.53 L 351.77,405.73 L 350.77,404.83 L 349.87,403.83 L 349.07,402.74 L 348.38,401.58 L 347.81,400.36 L 347.37,399.08 L 347.05,397.77 L 346.87,396.44 L 346.82,395.09 L 346.91,393.74 L 347.13,392.41 L 347.48,391.11 L 347.96,389.85 L 348.56,388.64 L 349.28,387.50 L 350.12,386.44 L 351.05,385.47 L 352.07,384.59 L 353.18,383.82 L 354.36,383.17 L 355.60,382.63 Z" fill="none" stroke="#cdca8e" stroke-width="9.5" stroke-linejoin="round"/>
<path d="M 378.35,377.25 L 372.97,400.00 L 372.43,401.24 L 371.78,402.42 L 371.01,403.53 L 370.13,404.55 L 369.16,405.48 L 368.10,406.32 L 366.96,407.04 L 365.75,407.64 L 364.49,408.12 L 363.19,408.47 L 361.86,408.69 L 360.51,408.78 L 359.16,408.73 L 357.83,408.55 L 356.52,408.23 L 355.24,407.79 L 354.02,407.22 L 352.86,406.53 L 351.77,405.73 L 350.77,404.83 L 349.87,403.83 L 349.07,402.74 L 348.38,401.58 L 347.81,400.36 L 347.37,399.08 L 347.05,397.77 L 346.87,396.44 L 346.82,395.09 L 346.91,393.74 L 347.13,392.41 L 347.48,391.11 L 347.96,389.85 L 348.56,388.64 L 349.28,387.50 L 350.12,386.44 L 351.05,385.47 L 352.07,384.59 L 353.18,383.82 L 354.36,383.17 L 355.60,382.63 Z" fill="none" stroke="#eceaae" stroke-width="5" stroke-linejoin="round"/>
<circle cx="383.3" cy="372.3" r="10" fill="#ffffff" opacity="0.35"/>
<circle cx="383.3" cy="372.3" r="8" fill="url(#dot)"/>
</g></svg></div>
</body></html>
